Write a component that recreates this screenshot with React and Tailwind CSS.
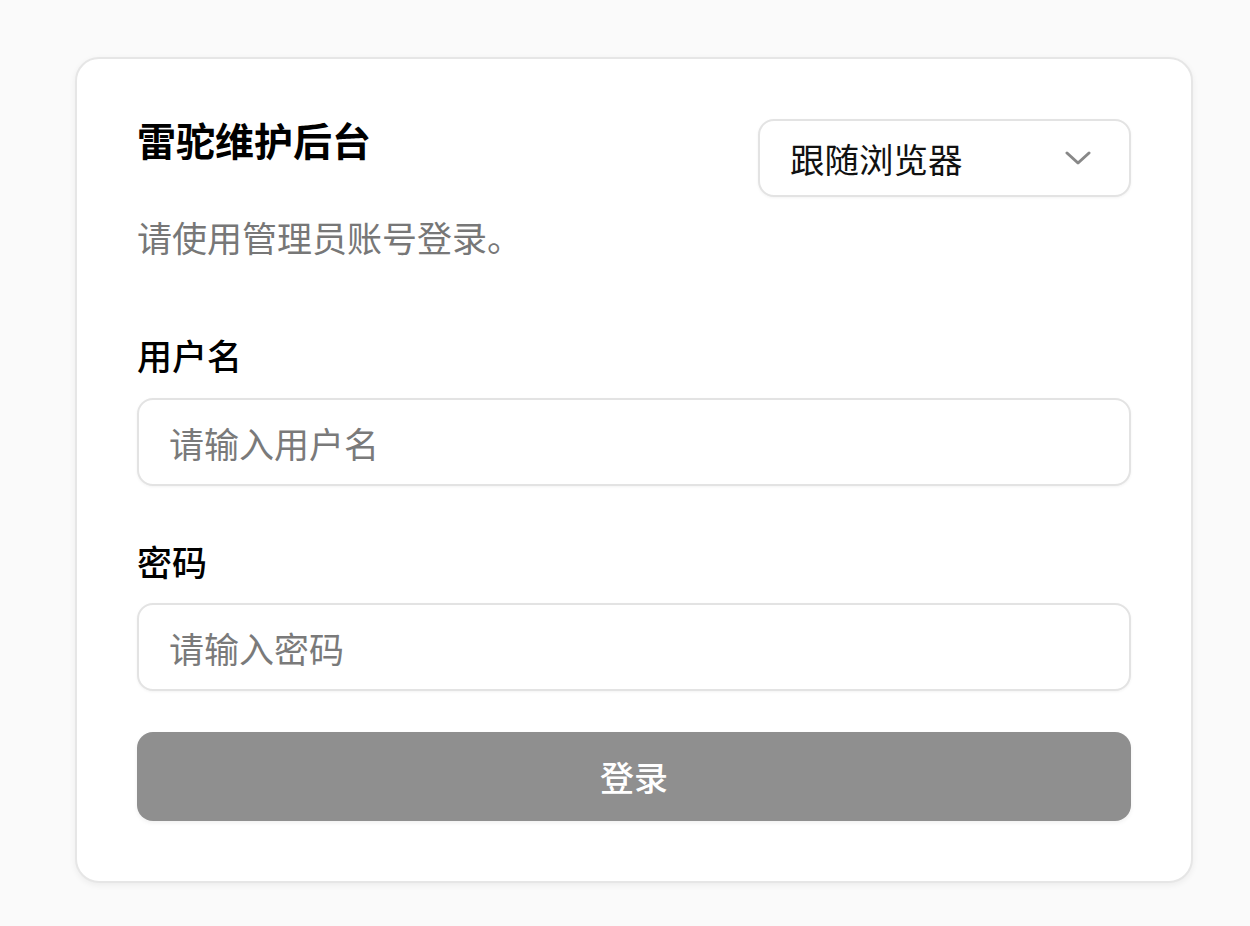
import React from 'react';

const font = { fontFamily: '"Noto Sans CJK SC", "Noto Sans", sans-serif' };

const LoginCard = () => {
    return (
        <div className="w-[1118px] rounded-[24px] border-2 border-[#e6e6e6] bg-white px-[60px] pt-[60px] pb-[60px] shadow-[0_2px_6px_rgba(0,0,0,0.06)]">
            <div className="flex items-start justify-between">
                <div className="flex flex-col">
                    <h1 className="text-[39px] leading-[40px] font-bold text-black">雷驼维护后台</h1>
                    <p className="mt-[54px] text-[35px] leading-[48px] text-[#777777]">请使用管理员账号登录。</p>
                </div>
                <button className="flex h-[78px] w-[373px] items-center justify-between rounded-[16px] border-2 border-[#e3e3e3] bg-white pl-[30px] pr-[38px] shadow-[0_1px_3px_rgba(0,0,0,0.05)]">
                    <span className="text-[34.5px] leading-[48px] text-[#111111]">跟随浏览器</span>
                    <svg width="26" height="14" viewBox="0 0 26 14" fill="none">
                        <path d="M2 2 L13 12 L24 2" stroke="#888888" strokeWidth="3" strokeLinecap="round" strokeLinejoin="round" />
                    </svg>
                </button>
            </div>

            <label className="mt-[70px] block text-[35px] leading-[48px] font-medium text-black">用户名</label>
            <input
                className="mt-[19px] block h-[88px] w-full rounded-[16px] border-2 border-[#e3e3e3] bg-white px-[30px] text-[35px] text-black outline-none placeholder:text-[#7a7a7a] shadow-[0_1px_3px_rgba(0,0,0,0.05)]"
                placeholder="请输入用户名"
                style={font}
            />

            <label className="mt-[51px] block text-[35px] leading-[48px] font-medium text-black">密码</label>
            <input
                type="password"
                className="mt-[18px] block h-[88px] w-full rounded-[16px] border-2 border-[#e3e3e3] bg-white px-[30px] text-[35px] text-black outline-none placeholder:text-[#7a7a7a] shadow-[0_1px_3px_rgba(0,0,0,0.05)]"
                placeholder="请输入密码"
                style={font}
            />

            <button className="mt-[41px] flex h-[89px] w-full items-center justify-center rounded-[16px] bg-[#8f8f8f] text-[34px] font-medium text-white shadow-[0_2px_4px_rgba(0,0,0,0.06)]">
                登录
            </button>
        </div>
    );
};

const App = () => {
    return (
        <div className="min-h-[926px] bg-[#fafafa] pl-[75px] pt-[57px]" style={font}>
            <LoginCard />
        </div>
    );
};

export default App;
